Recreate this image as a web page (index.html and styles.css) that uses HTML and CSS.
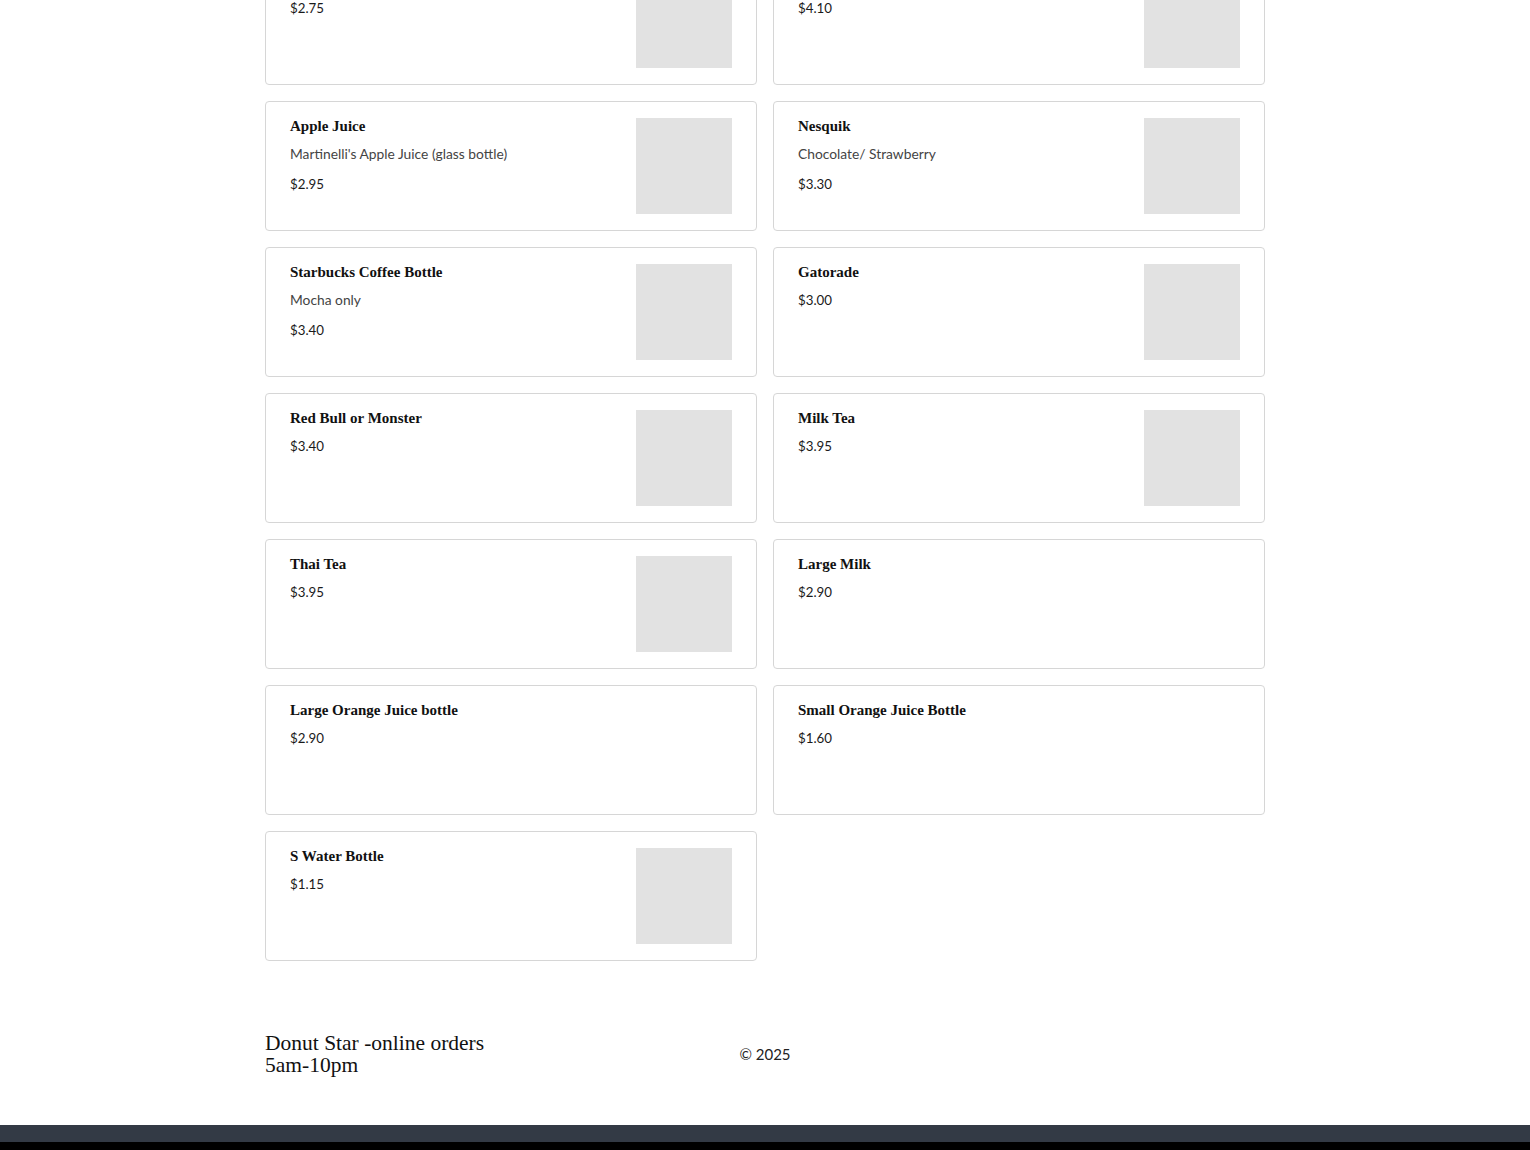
FILE: index.html
```html
<!DOCTYPE html>
<html lang="en">
<head>
<meta charset="utf-8">
<title>Donut Star - Drinks</title>
<link rel="stylesheet" href="styles.css">
</head>
<body>
<main class="menu">
  <div class="grid">
    <div class="card"><div class="info"><div class="title">Hot Chocolate</div><div class="price">$2.75</div></div><div class="thumb"></div></div>
    <div class="card"><div class="info"><div class="title">Iced Coffee</div><div class="price">$4.10</div></div><div class="thumb"></div></div>

    <div class="card"><div class="info"><div class="title">Apple Juice</div><div class="desc">Martinelli's Apple Juice (glass bottle)</div><div class="price">$2.95</div></div><div class="thumb"></div></div>
    <div class="card"><div class="info"><div class="title">Nesquik</div><div class="desc">Chocolate/ Strawberry</div><div class="price">$3.30</div></div><div class="thumb"></div></div>

    <div class="card"><div class="info"><div class="title">Starbucks Coffee Bottle</div><div class="desc">Mocha only</div><div class="price">$3.40</div></div><div class="thumb"></div></div>
    <div class="card"><div class="info"><div class="title">Gatorade</div><div class="price">$3.00</div></div><div class="thumb"></div></div>

    <div class="card"><div class="info"><div class="title">Red Bull or Monster</div><div class="price">$3.40</div></div><div class="thumb"></div></div>
    <div class="card"><div class="info"><div class="title">Milk Tea</div><div class="price">$3.95</div></div><div class="thumb"></div></div>

    <div class="card"><div class="info"><div class="title">Thai Tea</div><div class="price">$3.95</div></div><div class="thumb"></div></div>
    <div class="card"><div class="info"><div class="title">Large Milk</div><div class="price">$2.90</div></div></div>

    <div class="card"><div class="info"><div class="title">Large Orange Juice bottle</div><div class="price">$2.90</div></div></div>
    <div class="card"><div class="info"><div class="title">Small Orange Juice Bottle</div><div class="price">$1.60</div></div></div>

    <div class="card"><div class="info"><div class="title">S Water Bottle</div><div class="price">$1.15</div></div><div class="thumb"></div></div>
  </div>
</main>
<footer class="site-footer">
  <div class="footer-inner">
    <div class="brand">Donut Star -online orders<br>5am-10pm</div>
    <div class="copy">© 2025</div>
    <div class="spacer"></div>
  </div>
</footer>
<div class="bottom-bar"></div>
<div class="bottom-edge"></div>
</body>
</html>
```
FILE: styles.css
```css
html, body {
  margin: 0;
  padding: 0;
  background: #ffffff;
}
body {
  font-family: "Lato", "Liberation Sans", sans-serif;
  color: #222;
  overflow: hidden;
}
.menu {
  width: 1000px;
  margin: -45px auto 0;
  padding-bottom: 23px;
}
.grid {
  display: grid;
  grid-template-columns: 1fr 1fr;
  gap: 16px;
}
.card {
  box-sizing: border-box;
  height: 130px;
  border: 1px solid #d6d6d6;
  border-radius: 4px;
  padding: 16px 24px;
  display: flex;
  justify-content: space-between;
  align-items: flex-start;
  background: #fff;
}
.info {
  flex: 1;
  min-width: 0;
}
.title {
  font-family: "Liberation Serif", serif;
  font-weight: bold;
  font-size: 15px;
  line-height: 16px;
  color: #111;
}
.desc {
  margin-top: 10px;
  font-size: 13.8px;
  line-height: 20px;
  color: #444;
}
.price {
  margin-top: 10px;
  font-size: 13.3px;
  line-height: 20px;
  color: #1a1a1a;
}
.thumb {
  width: 96px;
  height: 96px;
  background: #e2e2e2;
  flex: none;
}
.site-footer {
  padding: 48px 0 49px;
}
.footer-inner {
  width: 1000px;
  margin: 0 auto;
  display: grid;
  grid-template-columns: 1fr auto 1fr;
  align-items: center;
}
.brand {
  font-family: "Liberation Serif", serif;
  font-size: 21.5px;
  line-height: 22px;
  color: #111;
}
.copy {
  font-size: 15px;
  color: #222;
}
.bottom-bar {
  height: 17px;
  background: #333a45;
}
.bottom-edge {
  height: 40px;
  background: #000;
}
```
